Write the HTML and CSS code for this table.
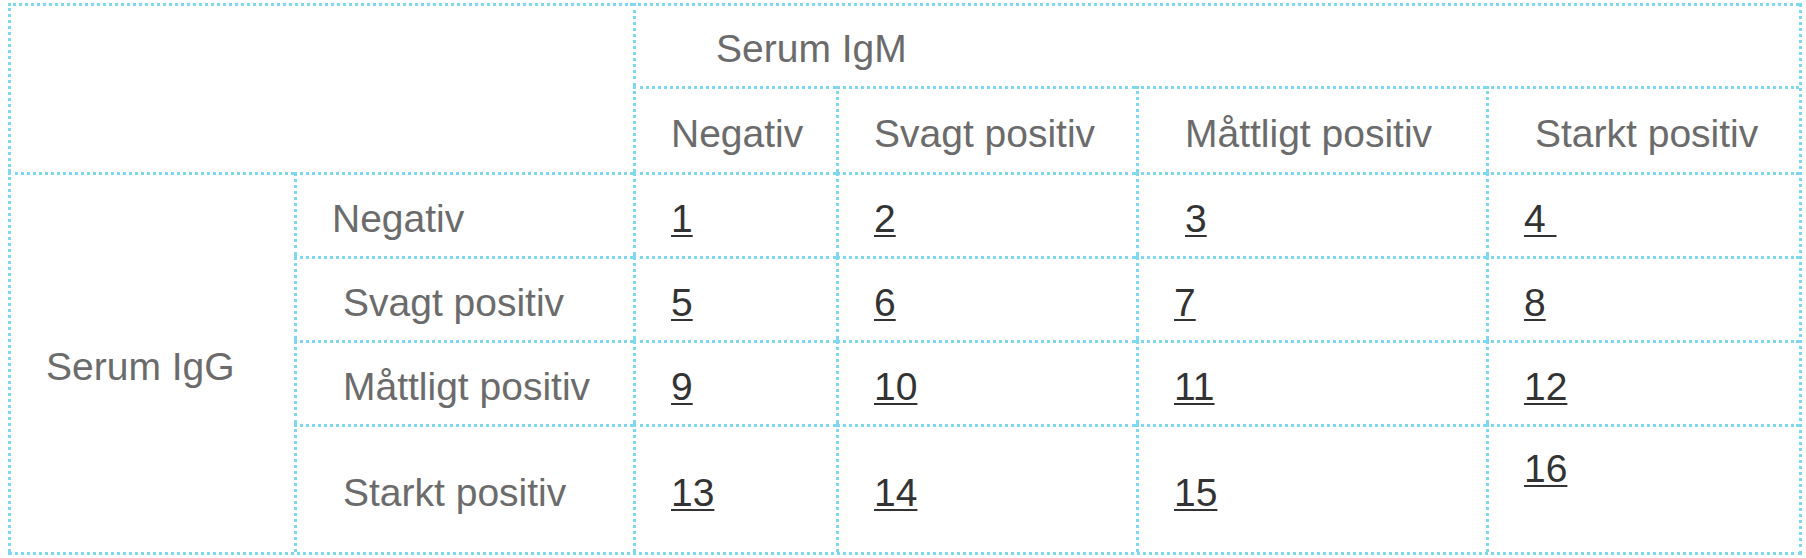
FILE: index.html
```html
<!DOCTYPE html>
<html lang="sv">
<head>
<meta charset="utf-8">
<title>Serum IgG / IgM</title>
<link rel="stylesheet" href="styles.css">
</head>
<body>
<table class="grid">
  <colgroup>
    <col class="c-a">
    <col class="c-b">
    <col class="c-c">
    <col class="c-d">
    <col class="c-e">
    <col class="c-f">
  </colgroup>
  <tr class="r-top">
    <td rowspan="2" colspan="2"></td>
    <td colspan="4" class="igm">Serum IgM</td>
  </tr>
  <tr class="r-head">
    <td>Negativ</td>
    <td>Svagt positiv</td>
    <td class="indent">Måttligt positiv</td>
    <td class="indent">Starkt positiv</td>
  </tr>
  <tr class="r-body">
    <td rowspan="4">Serum IgG</td>
    <td>Negativ</td>
    <td><span class="num">1</span></td>
    <td><span class="num">2</span></td>
    <td class="indent"><span class="num">3</span></td>
    <td><span class="num">4&nbsp;</span></td>
  </tr>
  <tr class="r-body">
    <td class="indent">Svagt positiv</td>
    <td><span class="num">5</span></td>
    <td><span class="num">6</span></td>
    <td><span class="num">7</span></td>
    <td><span class="num">8</span></td>
  </tr>
  <tr class="r-body">
    <td class="indent">Måttligt positiv</td>
    <td><span class="num">9</span></td>
    <td><span class="num">10</span></td>
    <td><span class="num">11</span></td>
    <td><span class="num">12</span></td>
  </tr>
  <tr class="r-last">
    <td class="indent">Starkt positiv</td>
    <td><span class="num">13</span></td>
    <td><span class="num">14</span></td>
    <td><span class="num">15</span></td>
    <td class="top"><span class="num">16</span></td>
  </tr>
</table>
</body>
</html>
```

FILE: styles.css
```css
html, body {
  background: #ffffff;
}

body {
  margin: 3px 0 0 8px;
  font-family: "Liberation Sans", Arial, Helvetica, sans-serif;
  font-size: 39px;
  color: #6b6b6b;
}

.grid {
  width: 1794px;
  table-layout: fixed;
  border-collapse: separate;
  border-spacing: 0;
  border-right: 3px dotted #7dd8f0;
  border-bottom: 3px dotted #7dd8f0;
}

.c-a { width: 286px; }
.c-b { width: 339px; }
.c-c { width: 203px; }
.c-d { width: 300px; }
.c-e { width: 350px; }
.c-f { width: 313px; }

.grid td {
  border-left: 3px dotted #7dd8f0;
  border-top: 3px dotted #7dd8f0;
  padding: 6px 0 0 35px;
  vertical-align: middle;
  white-space: nowrap;
  text-align: left;
}

.r-top { height: 83px; }
.r-head { height: 86px; }
.r-body { height: 84px; }
.r-last { height: 128px; }

.grid td.igm {
  padding-left: 80px;
}

.grid td.indent {
  padding-left: 46px;
}

.grid td.top {
  vertical-align: top;
  padding-top: 20px;
}

.num {
  color: #333333;
  text-decoration: underline;
  text-decoration-thickness: 2px;
  text-underline-offset: 3px;
}
```
